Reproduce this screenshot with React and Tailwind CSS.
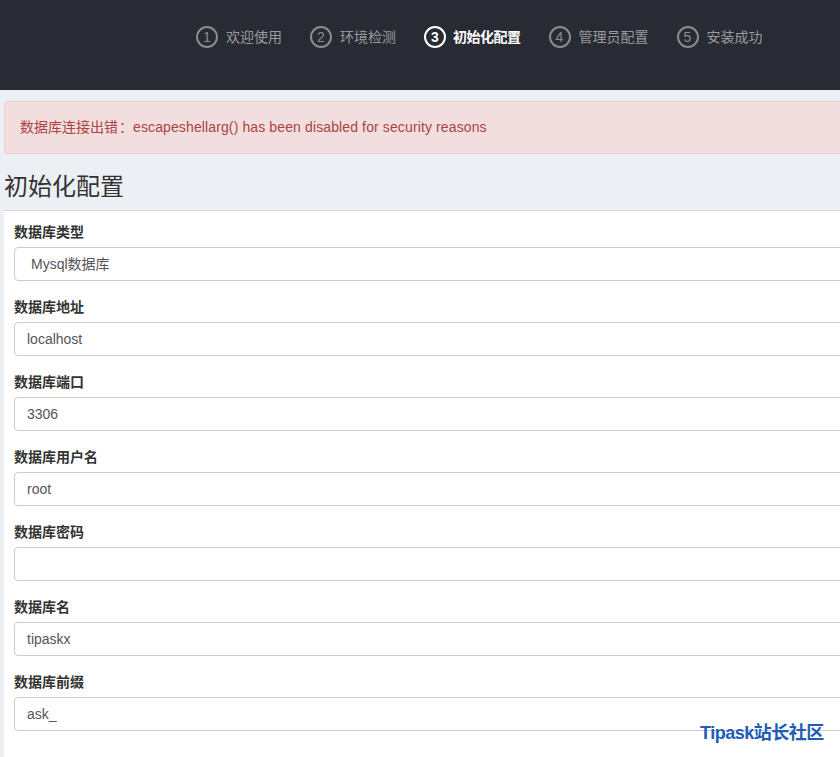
const steps = [
  { n: 1, label: "欢迎使用" },
  { n: 2, label: "环境检测" },
  { n: 3, label: "初始化配置", active: true },
  { n: 4, label: "管理员配置" },
  { n: 5, label: "安装成功" },
];

const fields = [
  { label: "数据库类型", value: "Mysql数据库", select: true },
  { label: "数据库地址", value: "localhost" },
  { label: "数据库端口", value: "3306" },
  { label: "数据库用户名", value: "root" },
  { label: "数据库密码", value: "" },
  { label: "数据库名", value: "tipaskx" },
  { label: "数据库前缀", value: "ask_" },
];

const font = { fontFamily: '"Liberation Sans", "Noto Sans CJK SC", sans-serif' };

export default function App() {
  return (
    <div
      className="relative w-[840px] h-[757px] overflow-hidden bg-[#ecf0f5] text-[#333]"
      style={font}
    >
      <div className="h-[90px] bg-[#282b33] flex pl-[196px] pt-[26px]">
        <div className="flex items-start h-[22px]">
          {steps.map((s) => (
            <div key={s.n} className="flex items-center mr-[28px]">
              <span
                className={
                  s.active
                    ? "w-[22px] h-[22px] rounded-full border-2 border-white text-white font-bold text-[14px] flex items-center justify-center"
                    : "w-[22px] h-[22px] rounded-full border-2 border-[#8a8c90] text-[#8a8c90] text-[14px] flex items-center justify-center"
                }
              >
                {s.n}
              </span>
              <span
                className={
                  s.active
                    ? "ml-[7px] text-[14px] text-white font-bold tracking-[-0.5px]"
                    : "ml-[8px] text-[14px] text-[#999a9d]"
                }
              >
                {s.label}
              </span>
            </div>
          ))}
        </div>
      </div>

      <div className="w-[1000px] pl-[4px] pt-[11px]">
        <div className="h-[53px] bg-[#f2dede] border border-[#ebccd1] rounded-[4px] flex items-center pl-[15px] text-[14px] text-[#a94442]">
          数据库连接出错<span className="pl-[1px]">：</span>
          <span className="tracking-[0.12px]">escapeshellarg() has been disabled for security reasons</span>
        </div>

        <h3 className="mt-[17px] h-[39px] text-[24px] leading-[32px] text-[#333]">初始化配置</h3>

        <div className="bg-white border-t border-[#d2d6de] pl-[10px] pt-[11px] pb-[20px]">
          {fields.map((f) => (
            <div key={f.label} className="mb-[16px]">
              <div className="h-[20px] leading-[20px] text-[14px] font-bold text-[#333] mb-[5px]">
                {f.label}
              </div>
              <div
                className={
                  f.select
                    ? "h-[34px] border border-[#ccc] rounded-[4px] flex items-center pl-[16px] text-[14px] text-[#555]"
                    : "h-[34px] border border-[#ccc] rounded-[4px] flex items-center pl-[12px] text-[14px] text-[#555]"
                }
              >
                {f.value}
              </div>
            </div>
          ))}
        </div>
      </div>

      <div className="absolute left-[700px] top-[720px] text-[18px] font-bold text-[#1d5cb8] tracking-[-0.5px]">
        Tipask站长社区
      </div>
    </div>
  );
}
